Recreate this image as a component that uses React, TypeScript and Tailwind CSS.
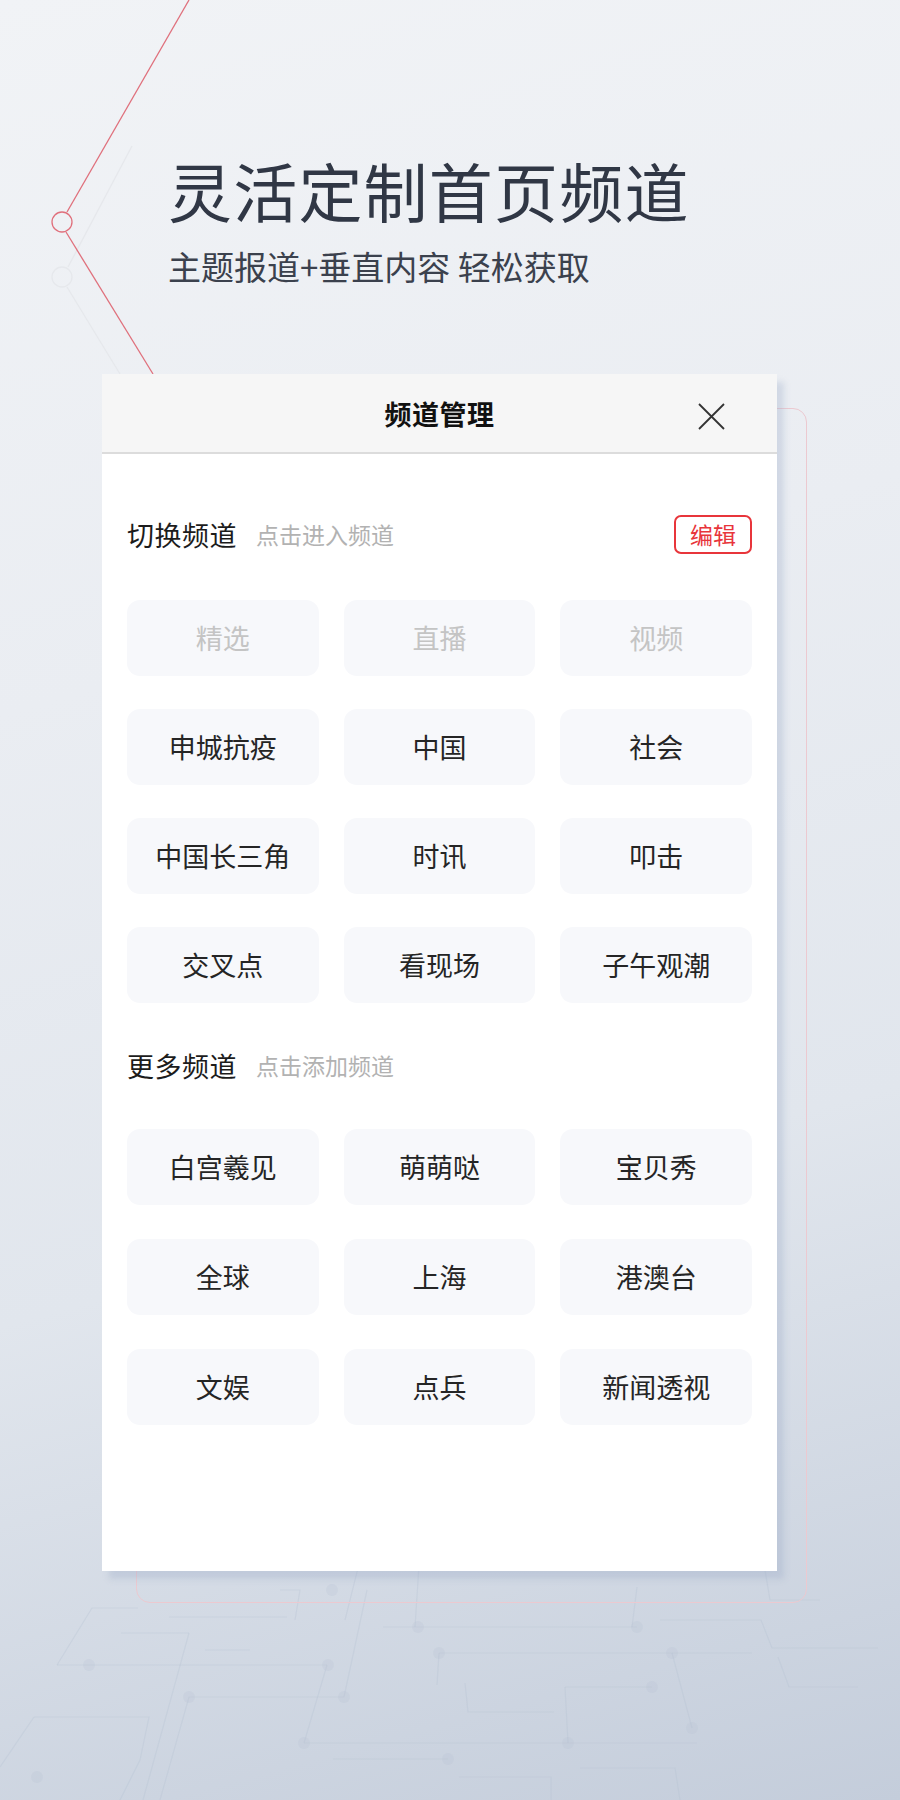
import React from "react";

const FONT = "font-['Noto_Sans_CJK_SC','Noto_Sans',sans-serif]";

const myChannels = [
  { name: "精选", fixed: true },
  { name: "直播", fixed: true },
  { name: "视频", fixed: true },
  { name: "申城抗疫" },
  { name: "中国" },
  { name: "社会" },
  { name: "中国长三角" },
  { name: "时讯" },
  { name: "叩击" },
  { name: "交叉点" },
  { name: "看现场" },
  { name: "子午观潮" },
];

const moreChannels = [
  "白宫羲见",
  "萌萌哒",
  "宝贝秀",
  "全球",
  "上海",
  "港澳台",
  "文娱",
  "点兵",
  "新闻透视",
];

const TopLines: React.FC = () => (
  <svg
    className="absolute left-0 top-0"
    width="220"
    height="380"
    viewBox="0 0 220 380"
    fill="none"
  >
    {/* faint grey branch */}
    <path d="M132 146 L68 267" stroke="#e6e8ec" strokeWidth="1.3" />
    <circle cx="62" cy="277" r="10" stroke="#e6e8ec" strokeWidth="1.3" />
    <path d="M67 287 L120 374" stroke="#e6e8ec" strokeWidth="1.3" />
    {/* red branch */}
    <path d="M189 0 L67 212" stroke="#e0707c" strokeWidth="1.3" />
    <circle cx="62" cy="222" r="10" stroke="#e0707c" strokeWidth="1.3" />
    <path d="M66 232 L153 374" stroke="#e0707c" strokeWidth="1.3" />
  </svg>
);

const Circuit: React.FC = () => {
  const lines = [
    "M383 1627 L637 1627",
    "M637 1587 L632 1627",
    "M439 1653 L752 1653",
    "M439 1653 L437 1685",
    "M57 1665 L327 1665",
    "M57 1665 L92 1608 L138 1608",
    "M121 1633 L189 1633",
    "M169 1617 L287 1617",
    "M189 1633 L143 1800",
    "M189 1697 L344 1697",
    "M189 1697 L160 1800",
    "M304 1743 L697 1743",
    "M333 1759 L448 1759",
    "M344 1697 L367 1590",
    "M327 1665 L304 1743",
    "M660 1620 L761 1620 L772 1648 L878 1648",
    "M778 1657 L789 1687 L858 1687",
    "M672 1653 L692 1728",
    "M565 1687 L652 1687",
    "M565 1687 L568 1743",
    "M465 1683 L468 1712 L554 1712",
    "M580 1768 L675 1768 L680 1800",
    "M459 1777 L551 1777 L551 1800",
    "M34 1717 L149 1717 L140 1760",
    "M0 1767 L34 1717",
    "M205 1650 L250 1650",
    "M280 1590 L300 1590 L295 1620",
    "M760 1540 L770 1600 L820 1600",
    "M360 1560 L345 1620",
    "M420 1550 L415 1627",
    "M140 1760 L120 1800",
  ];
  const dots: [number, number][] = [
    [418, 1627],
    [637, 1627],
    [439, 1653],
    [672, 1653],
    [89, 1665],
    [328, 1665],
    [189, 1697],
    [344, 1697],
    [304, 1743],
    [568, 1743],
    [652, 1687],
    [692, 1728],
    [448, 1759],
    [37, 1777],
    [332, 1590],
  ];
  return (
    <svg
      className="absolute left-0 top-0"
      width="900"
      height="1800"
      viewBox="0 0 900 1800"
      fill="none"
    >
      {lines.map((d, i) => (
        <path key={i} d={d} stroke="#b4c0d0" strokeOpacity="0.3" strokeWidth="1.2" />
      ))}
      {dots.map(([x, y], i) => (
        <circle key={i} cx={x} cy={y} r="6" fill="#b4c0d0" fillOpacity="0.22" />
      ))}
    </svg>
  );
};

const Tile: React.FC<{ name: string; muted?: boolean }> = ({ name, muted }) => (
  <div
    className={`h-[76px] rounded-[13px] bg-[#f7f8fb] flex items-center justify-center text-[27px] ${
      muted ? "text-[#c4c4c4]" : "text-[#252525]"
    }`}
  >
    {name}
  </div>
);

const SectionHead: React.FC<{ title: string; hint: string; action?: boolean }> = ({
  title,
  hint,
  action,
}) => (
  <div className="h-[40px] flex items-center">
    <span className="text-[27px] text-[#1c1c1c] leading-none tracking-[0.5px]">{title}</span>
    <span className="ml-[19px] text-[23px] text-[#b2b2b2] leading-none">{hint}</span>
    {action && (
      <button className="ml-auto h-[39px] w-[78px] rounded-[7px] border-2 border-[#e8353b] text-[#e8353b] text-[23px] leading-none flex items-center justify-center">
        编辑
      </button>
    )}
  </div>
);

const App: React.FC = () => {
  return (
    <div
      className={`relative w-[900px] h-[1800px] overflow-hidden bg-[linear-gradient(165deg,#f1f3f6_0%,#eaedf2_35%,#e1e6ed_65%,#c4cddb_100%)] ${FONT}`}
    >
      <Circuit />
      <TopLines />

      {/* outline frame behind the panel */}
      <div className="absolute left-[136px] top-[408px] w-[671px] h-[1195px] rounded-[14px] border border-[#ecc9d0]" />

      <div className="relative pt-[157px] pl-[168px]">
        <h1 className="text-[64px] leading-none text-[#303745] tracking-[1.2px]">
          灵活定制首页频道
        </h1>
        <p className="mt-[29px] text-[33px] leading-none text-[#3b414d]">
          主题报道+垂直内容 轻松获取
        </p>
      </div>

      <div className="relative mt-[91px] ml-[102px] w-[675px] h-[1197px] bg-white shadow-[7px_8px_6px_rgba(150,165,195,0.3)]">
        <div className="relative h-[80px] bg-[#f6f6f6] border-b-2 border-[#dcdcdc] flex items-center justify-center">
          <span className="text-[27px] font-bold text-[#111111] leading-none tracking-[0.5px]">
            频道管理
          </span>
          <svg
            className="absolute right-[52px] top-[29px]"
            width="27"
            height="27"
            viewBox="0 0 27 27"
          >
            <path d="M1 1 L26 26 M26 1 L1 26" stroke="#333333" strokeWidth="1.8" />
          </svg>
        </div>

        <div className="px-[25px] pt-[60px]">
          <SectionHead title="切换频道" hint="点击进入频道" action />
          <div className="mt-[46px] grid grid-cols-3 gap-x-[25px] gap-y-[33px]">
            {myChannels.map((c) => (
              <Tile key={c.name} name={c.name} muted={c.fixed} />
            ))}
          </div>

          <div className="mt-[42px]">
            <SectionHead title="更多频道" hint="点击添加频道" />
          </div>
          <div className="mt-[44px] grid grid-cols-3 gap-x-[25px] gap-y-[34px]">
            {moreChannels.map((n) => (
              <Tile key={n} name={n} />
            ))}
          </div>
        </div>
      </div>
    </div>
  );
};

export default App;
